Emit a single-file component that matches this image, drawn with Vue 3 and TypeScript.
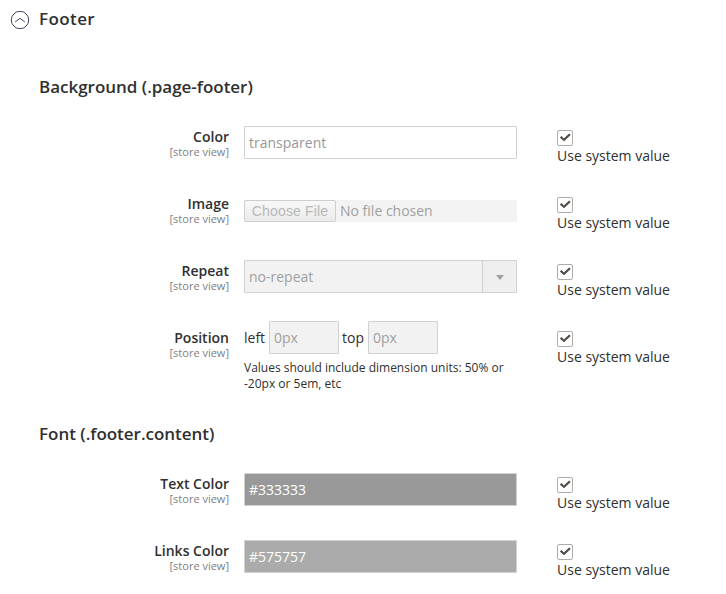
<script setup lang="ts">
import { ref } from 'vue'

type Kind = 'text' | 'file' | 'select' | 'position' | 'swatch'
interface Field {
  label: string
  kind: Kind
  value: string
}
interface Group {
  title: string
  fields: Field[]
}

const open = ref(true)
const groups: Group[] = [
  {
    title: 'Background (.page-footer)',
    fields: [
      { label: 'Color', kind: 'text', value: 'transparent' },
      { label: 'Image', kind: 'file', value: 'No file chosen' },
      { label: 'Repeat', kind: 'select', value: 'no-repeat' },
      { label: 'Position', kind: 'position', value: '0px' },
    ],
  },
  {
    title: 'Font (.footer.content)',
    fields: [
      { label: 'Text Color', kind: 'swatch', value: '#333333' },
      { label: 'Links Color', kind: 'swatch', value: '#575757' },
    ],
  },
]

// Disabled swatches are shown at half strength.
const fade = (hex: string): string => (hex === '#333333' ? '#999999' : '#ababab')
</script>

<template>
  <main class="config">
    <header class="section-head" @click="open = !open">
      <svg class="toggle" viewBox="0 0 20 20" width="20" height="20">
        <circle cx="10" cy="10" r="8.7" />
        <path d="M5.2 11.9 L10 8.3 L14.8 11.9" />
      </svg>
      <h2>Footer</h2>
    </header>
    <template v-if="open">
      <section v-for="group in groups" :key="group.title" class="group">
        <h3>{{ group.title }}</h3>
        <div v-for="field in group.fields" :key="field.label" class="row">
          <div class="label">
            <span class="name">{{ field.label }}</span>
            <span class="scope">[store view]</span>
          </div>
          <div class="control" :class="field.kind">
            <div v-if="field.kind === 'text'" class="box plain">{{ field.value }}</div>
            <div v-else-if="field.kind === 'file'" class="file-box">
              <span class="choose">Choose File</span>
              <span class="file-name">{{ field.value }}</span>
            </div>
            <div v-else-if="field.kind === 'select'" class="box select-box">
              <span>{{ field.value }}</span>
              <span class="arrow"><i></i></span>
            </div>
            <template v-else-if="field.kind === 'position'">
              <div class="pair">
                <span class="side left">left</span>
                <div class="box small">{{ field.value }}</div>
                <span class="side top">top</span>
                <div class="box small">{{ field.value }}</div>
              </div>
              <p class="note">Values should include dimension units: 50% or<br />-20px or 5em, etc</p>
            </template>
            <div v-else class="box color" :style="{ backgroundColor: fade(field.value) }">{{ field.value }}</div>
          </div>
          <div class="inherit">
            <span class="check">
              <svg viewBox="0 0 16 16" width="16" height="16">
                <path d="M2.8 7.6 L4.6 6.1 L6.8 8.4 L12.2 3.5 L13.7 4.9 L7 11.3 Z" />
              </svg>
            </span>
            <span class="use">Use system value</span>
          </div>
        </div>
      </section>
    </template>
  </main>
</template>

<style>
body {
  background: #fff;
}
</style>

<style scoped>
.config {
  box-sizing: border-box;
  width: 726px;
  height: 594px;
  overflow: hidden;
  padding-top: 8px;
  font: 400 14px/19px 'Open Sans', sans-serif;
  color: #303030;
}
.section-head {
  display: flex;
  align-items: center;
  gap: 9px;
  height: 24px;
  padding-left: 10px;
}
.toggle {
  fill: none;
  stroke: #42425c;
  stroke-width: 1;
}
h2,
h3 {
  margin: 0;
  font-size: 17px;
  line-height: 22px;
  font-weight: 600;
}
h2 {
  margin-top: -2px;
  letter-spacing: 0.4px;
}
.group {
  padding-top: 44px;
}
.group + .group {
  padding-top: 29px;
}
h3 {
  margin: 0 0 28px 39px;
  letter-spacing: -0.02px;
}
.row {
  display: grid;
  grid-template-columns: 229px 273px 1fr;
  column-gap: 15px;
  height: 67px;
}
.label {
  display: flex;
  flex-direction: column;
  align-items: flex-end;
  padding-top: 2px;
}
.name {
  font-weight: 600;
  line-height: 18px;
}
.scope {
  font-size: 11px;
  line-height: 11px;
  color: #808080;
}
.box {
  box-sizing: border-box;
  height: 33px;
  border: 1px solid #d1d1d1;
  border-radius: 1px;
  padding: 0 4px;
  line-height: 32px;
  background: #f2f2f2;
  color: #a0a0a0;
}
.plain {
  background: #fff;
  color: #979797;
}
.color {
  color: #fff;
}
.file {
  padding-top: 7px;
}
.file-box {
  display: flex;
  align-items: center;
  gap: 4px;
  height: 22px;
  background: #f3f3f3;
  color: #a0a0a0;
}
.file-name {
  margin-top: -2px;
}
.choose {
  box-sizing: border-box;
  width: 92px;
  height: 22px;
  border: 1px solid #cfcfcf;
  border-radius: 2px;
  background: linear-gradient(#f8f8f8, #ebebeb);
  text-align: center;
  font: 14px/20px 'Liberation Sans', sans-serif;
  letter-spacing: 0.15px;
  color: #b8b8b8;
}
.select-box {
  display: flex;
  justify-content: space-between;
  padding-right: 0;
}
.arrow {
  display: flex;
  align-items: center;
  justify-content: center;
  width: 33px;
  border-left: 1px solid #d1d1d1;
  background: #efefef;
}
.arrow i {
  margin-top: 2px;
  border: 4px solid transparent;
  border-top: 5px solid #a0a0a0;
  border-bottom: 0;
}
.position {
  margin-top: -6px;
}
.pair {
  display: flex;
  align-items: center;
}
.side {
  width: 25px;
}
.side.top {
  width: 26px;
  padding-left: 3px;
}
.small {
  width: 70px;
}
.note {
  margin: 6px 0 0;
  font-size: 12px;
  line-height: 16px;
  white-space: nowrap;
}
.inherit {
  display: flex;
  flex-direction: column;
  padding: 4px 0 0 25px;
}
.check {
  box-sizing: border-box;
  display: flex;
  width: 16px;
  height: 16px;
  border: 1px solid #adadad;
  border-radius: 2px;
}
.check svg {
  flex: none;
  margin: -1px;
  fill: #514943;
}
.use {
  line-height: 20px;
}
</style>
